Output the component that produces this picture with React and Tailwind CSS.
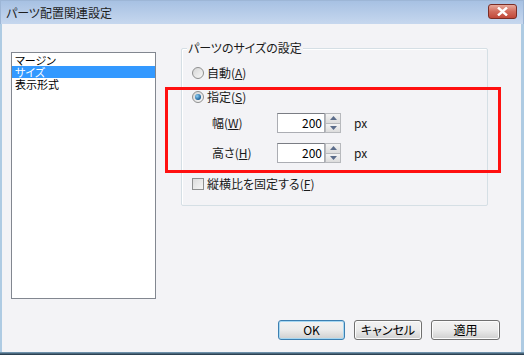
import React from "react";

const font = "[font-family:'Noto_Sans_CJK_JP','Noto_Sans',sans-serif] [font-feature-settings:'palt']";

function Radio({ checked }) {
  return (
    <span className="relative inline-block w-[12px] h-[12px] rounded-full border border-[#8e8f8f] bg-gradient-to-br from-[#d6d6d6] to-[#f8f8f8]">
      {checked && (
        <span className="absolute left-[2px] top-[2px] w-[6px] h-[6px] rounded-full bg-[radial-gradient(circle_at_35%_35%,#8fd0f5,#1a5f99_70%)]" />
      )}
    </span>
  );
}

function Spin({ value }) {
  return (
    <div className="flex h-[20px]">
      <div className="w-[48px] h-[20px] border border-[#abadb3] border-t-[#7a7d84] bg-white flex items-center justify-end pr-[2px] text-[12px] leading-none text-black">
        {value}
      </div>
      <div className="w-[16px] h-[20px] flex flex-col border border-[#b7b9bd] bg-[#eaeaea]">
        <div className="flex-1 flex items-center justify-center border-b border-[#b7b9bd] bg-gradient-to-b from-[#f4f4f4] to-[#dcdcdc]">
          <svg width="7" height="4" viewBox="0 0 7 4"><path d="M0 4 L3.5 0 L7 4 Z" fill="#5b6c8a" /></svg>
        </div>
        <div className="flex-1 flex items-center justify-center bg-gradient-to-b from-[#f4f4f4] to-[#dcdcdc]">
          <svg width="7" height="4" viewBox="0 0 7 4"><path d="M0 0 L3.5 4 L7 0 Z" fill="#5b6c8a" /></svg>
        </div>
      </div>
    </div>
  );
}

function Btn({ w, children, def }) {
  return (
    <div
      className={
        "h-[20px] flex items-center justify-center rounded-[3px] border text-[12px] leading-none text-black bg-gradient-to-b from-[#f2f2f2] via-[#ebebeb] to-[#cfcfcf] " +
        (def ? "border-[#3c7fb1] shadow-[inset_0_0_0_1px_#a6d7f2]" : "border-[#707070] shadow-[inset_0_0_0_1px_#fcfcfc]")
      }
      style={{ width: w }}
    >
      {children}
    </div>
  );
}

export default function App() {
  return (
    <div className={"relative w-[524px] h-[355px] overflow-hidden bg-[#f3f3f6] text-[#1a1a1a] " + font}>
      {/* title bar */}
      <div className="h-[24px] flex items-center justify-between pl-[5px] pr-[6px] bg-gradient-to-b from-[#a7c1e3] to-[#c6d7ee] border-x border-t border-[#9db6d6]">
        <span className="text-[12px] leading-none text-[#1e1e1e] mt-[1px]">パーツ配置関連設定</span>
        <div className="w-[29px] h-[15px] -mt-[3px] rounded-[3px] border border-[#7b2d25] bg-gradient-to-b from-[#e6a99c] via-[#d16b5c] to-[#c1483a] flex items-center justify-center">
          <svg width="11" height="9" viewBox="0 0 11 9">
            <path d="M1 0.5 L5.5 4.5 L10 0.5 M1 8.5 L5.5 4.5 L10 8.5" stroke="#ffffff" strokeWidth="2.4" fill="none" />
          </svg>
        </div>
      </div>

      {/* body */}
      <div className="h-[328px] flex flex-col border-x border-[#aecbe3] border-l-[2px] border-r-[3px]">
        <div className="flex">
          {/* list */}
          <div className="ml-[9px] mt-[28px] w-[145px] h-[247px] bg-white border border-[#828790] pt-[1px] text-[11px] leading-[12px]">
            <div className="h-[12px] pl-[3px] text-black">マージン</div>
            <div className="h-[12px] pl-[3px] bg-[#3399ff] text-white">サイズ</div>
            <div className="h-[12px] pl-[3px] text-black">表示形式</div>
          </div>

          {/* group */}
          <div className="relative ml-[25px] mt-[24px] w-[307px] h-[158px] border border-[#d5dfe5] rounded-[2px] shadow-[inset_1px_1px_0_#ffffff]">
            <span className="absolute left-[5px] -top-[8px] px-[1px] bg-[#f3f3f6] text-[12px] leading-[14px]">パーツのサイズの設定</span>
            <div className="flex flex-col pt-[17px] pl-[10px] text-[12px] leading-[14px]">
              <div className="h-[14px] flex items-center gap-[3px]">
                <Radio />
                <span>自動(<span className="underline">A</span>)</span>
              </div>
              <div className="mt-[10px] h-[14px] flex items-center gap-[3px]">
                <Radio checked />
                <span>指定(<span className="underline">S</span>)</span>
              </div>
              <div className="mt-[9px] h-[20px] flex items-center">
                <span className="ml-[20px] w-[65px]">幅(<span className="underline">W</span>)</span>
                <Spin value="200" />
                <span className="ml-[13px]">px</span>
              </div>
              <div className="mt-[10px] h-[20px] flex items-center">
                <span className="ml-[20px] w-[65px]">高さ(<span className="underline">H</span>)</span>
                <Spin value="200" />
                <span className="ml-[13px]">px</span>
              </div>
              <div className="mt-[14px] h-[14px] flex items-center gap-[3px]">
                <span className="w-[12px] h-[12px] border border-[#8e8f8f] bg-gradient-to-br from-[#dcdcdc] to-[#f6f6f6]" />
                <span>縦横比を固定する(<span className="underline">F</span>)</span>
              </div>
            </div>
          </div>
        </div>

        {/* buttons */}
        <div className="mt-[21px] flex justify-end gap-[9px] pr-[21px]">
          <Btn w={67} def>OK</Btn>
          <Btn w={68}>キャンセル</Btn>
          <Btn w={69}>適用</Btn>
        </div>
      </div>
      <div className="h-[3px] bg-gradient-to-b from-[#7fa6c2] to-[#1d2f3d]" />

      {/* red annotation */}
      <div className="absolute left-[165px] top-[87px] w-[336px] h-[86px] border-[3px] border-[#ff1010]" />
    </div>
  );
}
